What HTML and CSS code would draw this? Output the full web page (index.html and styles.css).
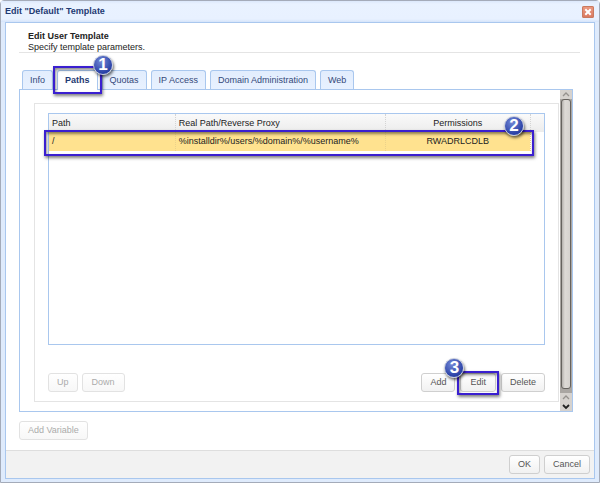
FILE: index.html
```html
<!DOCTYPE html>
<html lang="en">
<head>
    <meta charset="UTF-8">
    <meta name="viewport" content="width=device-width, initial-scale=1.0">
    <title>Edit "Default" Template</title>
    <link rel="stylesheet" href="styles.css">
</head>
<body>
    <div class="window">
        <header class="title-bar">
            <h1>Edit "Default" Template</h1>
            <button type="button" class="close-button" aria-label="Close">
                <svg width="12" height="12" viewBox="0 0 12 12"><path d="M4 4l4 4M8 4l-4 4" stroke="#fff" stroke-width="2" stroke-linecap="square"/></svg>
            </button>
        </header>

        <main class="window-body">
            <div class="content">
                <div class="intro">
                    <h2>Edit User Template</h2>
                    <p>Specify template parameters.</p>
                </div>

                <nav class="tabs">
                    <a href="#" class="tab">Info</a>
                    <a href="#" class="tab active">Paths
                        <span class="frame tab-frame"></span>
                    </a>
                    <a href="#" class="tab">Quotas</a>
                    <a href="#" class="tab">IP Access</a>
                    <a href="#" class="tab">Domain Administration</a>
                    <a href="#" class="tab">Web</a>
                    <span class="badge badge-one">1</span>
                </nav>

                <section class="tab-panel">
                    <div class="panel-scroll">
                        <div class="group">
                            <div class="grid">
                                <table>
                                    <colgroup>
                                        <col class="col-path">
                                        <col class="col-real">
                                        <col class="col-perm">
                                        <col class="col-gutter">
                                    </colgroup>
                                    <thead>
                                        <tr>
                                            <th>Path</th>
                                            <th>Real Path/Reverse Proxy</th>
                                            <th class="center">Permissions</th>
                                            <td></td>
                                        </tr>
                                    </thead>
                                    <tbody>
                                        <tr>
                                            <td>/</td>
                                            <td>%installdir%/users/%domain%/%username%</td>
                                            <td class="center">RWADRLCDLB</td>
                                            <td class="gutter"></td>
                                        </tr>
                                    </tbody>
                                </table>
                                <span class="frame row-frame"></span>
                                <span class="badge badge-two">2</span>
                            </div>
                            <div class="actions">
                                <button type="button" class="btn" disabled>Up</button>
                                <button type="button" class="btn btn-wide" disabled>Down</button>
                                <span class="spacer"></span>
                                <button type="button" class="btn">Add</button>
                                <span class="marked">
                                    <button type="button" class="btn btn-wide">Edit</button>
                                    <span class="frame button-frame"></span>
                                    <span class="badge badge-three">3</span>
                                </span>
                                <button type="button" class="btn">Delete</button>
                            </div>
                        </div>
                    </div>
                    <div class="scrollbar">
                        <svg class="arrow" viewBox="0 0 12 9"><path d="M3 6l3-3 3 3" fill="none" stroke="#96928e" stroke-width="1.3"/></svg>
                        <div class="track"><div class="thumb"></div></div>
                        <svg class="arrow" viewBox="0 0 12 9"><path d="M3 6l3-3 3 3" fill="none" stroke="#96928e" stroke-width="1.3"/></svg>
                        <svg class="arrow" viewBox="0 0 12 9"><path d="M3 3l3 3 3-3" fill="none" stroke="#222" stroke-width="1.8"/></svg>
                    </div>
                </section>

                <div class="variables">
                    <button type="button" class="btn" disabled>Add Variable</button>
                </div>
            </div>

            <footer class="footer">
                <button type="button" class="btn">OK</button>
                <button type="button" class="btn">Cancel</button>
            </footer>
        </main>
    </div>
</body>
</html>
```

FILE: styles.css
```css
:root {
    --line-blue: #a9c7ee;
    --title-color: #1f3a72;
    --tab-color: #34497a;
    --text-color: #222;
    --mark-color: #3a1fd0;
}

* {
    margin: 0;
    padding: 0;
    box-sizing: border-box;
    font-family: "Liberation Sans", Arial, sans-serif;
}

body {
    background-color: #fff;
    color: var(--text-color);
    font-size: 9px;
    line-height: 11px;
}

.window {
    display: flex;
    flex-direction: column;
    min-height: 100vh;
    padding: 0 4px 3px;
    border: 1px solid #a4abb9;
    border-radius: 4px 4px 0 0;
    background-color: #dfebfc;
}

.title-bar {
    display: flex;
    align-items: center;
    justify-content: space-between;
    height: 21px;
    margin: 0 -4px;
    padding: 0 5px 0 4px;
    background: linear-gradient(#dce8fb, #e9f2ff 3px, #e8f1ff 18px, #d5e4fa);
}

.title-bar h1 {
    font-size: 9px;
    color: var(--title-color);
}

.close-button {
    display: block;
    width: 12px;
    height: 12px;
    border-radius: 2px;
    border: none;
    background: linear-gradient(#ec9b82, #d9775e);
    box-shadow: inset 0 0 0 1px #c8795f;
}

.close-button svg {
    display: block;
}

.window-body {
    display: flex;
    flex-direction: column;
    flex: 1;
    border: 1px solid var(--line-blue);
    background-color: #fff;
}

.content {
    display: flex;
    flex-direction: column;
    flex: 1;
    padding: 8px 21px 10px 13px;
}

.intro {
    margin-right: -7px;
    padding: 0 9px;
    border-bottom: 1px solid #e4e4e4;
}

.intro h2 {
    font-size: 9px;
}

.intro p {
    line-height: 10px;
}

/* Tabs */
.tabs {
    position: relative;
    display: flex;
    gap: 4px;
    height: 19px;
    margin-top: 17px;
    padding: 0 3px;
}

.tab {
    position: relative;
    padding: 4px 7px;
    border: 1px solid var(--line-blue);
    border-bottom: none;
    border-radius: 3px 3px 0 0;
    background: linear-gradient(#e2edfd, #e8f1ff);
    color: var(--tab-color);
    text-decoration: none;
}

.tab.active {
    z-index: 1;
    height: 20px;
    background: #fff;
    color: var(--title-color);
    font-weight: bold;
}

.tab-panel {
    display: flex;
    flex: 1;
    border: 1px solid var(--line-blue);
}

.panel-scroll {
    display: flex;
    flex: 1;
    padding: 13px 1px 9px 14px;
}

.group {
    display: flex;
    flex-direction: column;
    flex: 1;
    padding: 9px 13px;
    border: 1px solid #e4e4e4;
}

/* Path list */
.grid {
    position: relative;
    flex: 1;
    border: 1px solid var(--line-blue);
}

.grid table {
    width: 100%;
    table-layout: fixed;
    border-collapse: collapse;
}

.col-path {
    width: 25.5%;
}

.col-real {
    width: 42.5%;
}

.col-gutter {
    width: 14px;
}

.grid th,
.grid td {
    height: 18px;
    padding: 0 3px;
    text-align: left;
    font-weight: normal;
    border-right: 1px dotted #d4d4d4;
}

.grid thead tr {
    background: linear-gradient(#fafafa, #ececec);
}

.grid tbody td {
    height: 19px;
    background-color: #ffe28f;
    border-right-color: #ecd28a;
}

.grid tbody td.gutter {
    background-color: #fff;
}

.grid tr td:last-child {
    border-right: none;
}

.grid .center {
    text-align: center;
}

/* Buttons */
.btn {
    height: 19px;
    padding: 0 8px;
    border: 1px solid #cfcfcf;
    border-radius: 3px;
    background: linear-gradient(#fff, #f1f1f1);
    color: #555;
    font-size: 9px;
    line-height: 11px;
}

.btn:disabled {
    border-color: #e2e2e2;
    background: linear-gradient(#fff, #f7f7f7);
    color: #ababab;
}

.btn-wide {
    padding: 0 9px;
}

.actions {
    display: flex;
    gap: 4px;
    margin-top: 28px;
}

.spacer {
    flex: 1;
}

.marked {
    position: relative;
    display: flex;
    padding: 0 1px;
}

.variables {
    display: flex;
    margin-top: 9px;
}

.footer {
    display: flex;
    justify-content: flex-end;
    gap: 4px;
    padding: 4px;
    border-top: 1px solid #dedede;
    background-color: #f2f2f2;
}

/* Scrollbar */
.scrollbar {
    display: flex;
    flex-direction: column;
    width: 12px;
    background-color: #d6d2ce;
}

.arrow {
    width: 12px;
    height: 9px;
}

.track {
    flex: 1;
    padding: 0 1px 4px;
    background-color: #aaa6a2;
}

.thumb {
    height: 100%;
    border: 1px solid #66625e;
    border-radius: 3px;
    background: linear-gradient(to right, #b4b0ac, #dedad6 3px, #d6d2ce);
}

/* Numbered callouts */
.frame {
    position: absolute;
    z-index: 2;
    border: 2px solid var(--mark-color);
    box-shadow: 1px 2px 3px rgba(0, 0, 0, 0.5), inset 1px 2px 3px rgba(0, 0, 0, 0.45);
    pointer-events: none;
}

.tab-frame {
    inset: -5px -5px -4px -5px;
}

.row-frame {
    top: 16px;
    left: -5px;
    right: 10px;
    height: 26px;
}

.button-frame {
    inset: -2px -2px -3px -2px;
}

.badge {
    position: absolute;
    z-index: 3;
    width: 20px;
    height: 20px;
    border: 1px solid #c5cbdc;
    border-radius: 50%;
    background: radial-gradient(circle at 40% 30%, #7288d6, #2a41a6 70%);
    box-shadow: 1px 2px 3px rgba(0, 0, 0, 0.6);
    color: #fff;
    font-size: 17px;
    line-height: 18px;
    font-weight: bold;
    text-align: center;
}

.badge-one {
    top: -15px;
    left: 74px;
}

.badge-two {
    top: 2px;
    right: 20px;
}

.badge-three {
    top: -15px;
    left: -15px;
}
```
